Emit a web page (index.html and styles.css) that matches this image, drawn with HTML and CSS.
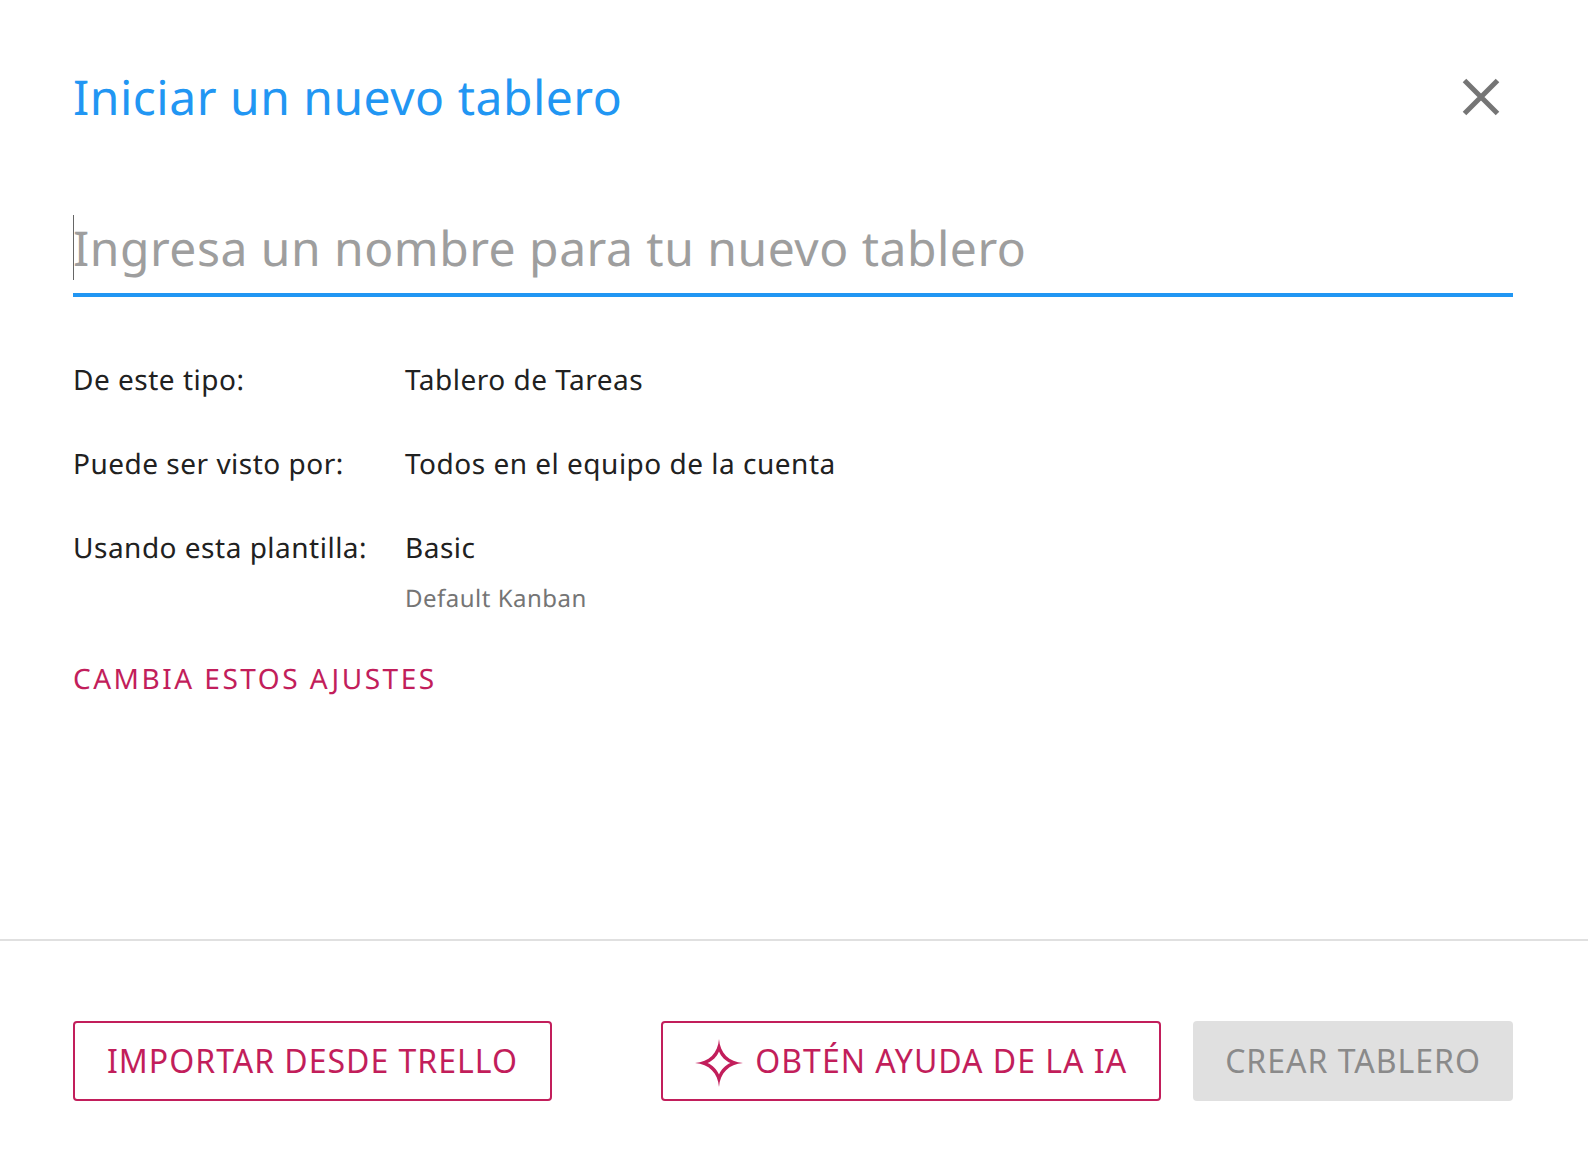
FILE: index.html
```html
<!DOCTYPE html>
<html>
<head>
  <title>Iniciar un nuevo tablero</title>
  <link rel="stylesheet" href="styles.css">
</head>
<body>
  <div class="dialog">
    <div class="dialog-header">
      <div class="dialog-title">Iniciar un nuevo tablero</div>
      <svg class="close-icon" width="38" height="38" viewBox="0 0 38 38">
        <path d="M2.5 2.5 L35.5 35.5 M35.5 2.5 L2.5 35.5" stroke="#757575" stroke-width="5" fill="none"/>
      </svg>
    </div>
    <div class="name-field">
      <span class="caret"></span>
      <span class="name-placeholder">Ingresa un nombre para tu nuevo tablero</span>
    </div>
    <div class="settings">
      <div class="setting-row">
        <div class="setting-label">De este tipo:</div>
        <div class="setting-value">Tablero de Tareas</div>
      </div>
      <div class="setting-row">
        <div class="setting-label">Puede ser visto por:</div>
        <div class="setting-value">Todos en el equipo de la cuenta</div>
      </div>
      <div class="setting-row">
        <div class="setting-label">Usando esta plantilla:</div>
        <div class="setting-value">
          Basic
          <div class="setting-note">Default Kanban</div>
        </div>
      </div>
    </div>
    <div class="change-link">CAMBIA ESTOS AJUSTES</div>
  </div>
  <div class="dialog-footer">
    <button class="button">IMPORTAR DESDE TRELLO</button>
    <div class="footer-right">
      <button class="button">
        <svg class="spark-icon" width="48" height="48" viewBox="0 0 48 48">
          <path fill-rule="evenodd" fill="#c21e5b" d="M24 0 C25 14 34 23 48 24 C34 25 25 34 24 48 C23 34 14 25 0 24 C14 23 23 14 24 0 Z M24 12.5 C22 17.5 17.5 22 12.5 24 C17.5 26 22 30.5 24 35.5 C26 30.5 30.5 26 35.5 24 C30.5 22 26 17.5 24 12.5 Z"/>
        </svg>
        OBTÉN AYUDA DE LA IA
      </button>
      <button class="button button-disabled">CREAR TABLERO</button>
    </div>
  </div>
</body>
</html>
```

FILE: styles.css
```css
body {
  margin: 0;
  background-color: #fff;
  color: #212121;
  font-family: "Noto Sans", sans-serif;
  text-rendering: geometricPrecision;
}

.dialog {
  height: 941px;
  box-sizing: border-box;
  padding: 66px 75px 0 73px;
  border-bottom: 2px solid #e0e0e0;
}

.dialog-header {
  display: flex;
  justify-content: space-between;
  align-items: center;
  height: 64px;
  padding-right: 13px;
}

.close-icon {
  margin-top: -2px;
}

.dialog-title {
  font-size: 48px;
  line-height: 64px;
  letter-spacing: 0.5px;
  color: #2196f3;
}

.name-field {
  position: relative;
  margin-top: 85px;
  height: 78px;
  border-bottom: 4px solid #2196f3;
}

.caret {
  position: absolute;
  left: 0;
  top: 0;
  width: 1px;
  height: 65px;
  background-color: #666;
}

.name-placeholder {
  font-size: 48px;
  line-height: 68px;
  letter-spacing: 0.5px;
  color: #9e9e9e;
}

.settings {
  margin-top: 63px;
}

.setting-row {
  display: flex;
  font-size: 28px;
  line-height: 40px;
  letter-spacing: 0.5px;
  margin-bottom: 44px;
}

.setting-label {
  width: 332px;
}

.setting-note {
  font-size: 24px;
  line-height: 33px;
  margin-top: 14px;
  color: #757575;
}

.change-link {
  font-size: 28px;
  line-height: 40px;
  letter-spacing: 2.5px;
  color: #c21e5b;
}

.dialog-footer {
  display: flex;
  justify-content: space-between;
  padding: 80px 75px 0 73px;
}

.footer-right {
  display: flex;
  gap: 32px;
}

.button {
  display: flex;
  align-items: center;
  height: 80px;
  padding: 0 32px 2px;
  background-color: #fff;
  border: 2px solid #c21e5b;
  border-radius: 4px;
  font-family: "Noto Sans", sans-serif;
  font-size: 32px;
  letter-spacing: 1px;
  color: #c21e5b;
}

.spark-icon {
  margin-top: 6px;
  margin-right: 12px;
}

.button-disabled {
  background-color: #e0e0e0;
  border: none;
  color: #8a8a8a;
}
```
